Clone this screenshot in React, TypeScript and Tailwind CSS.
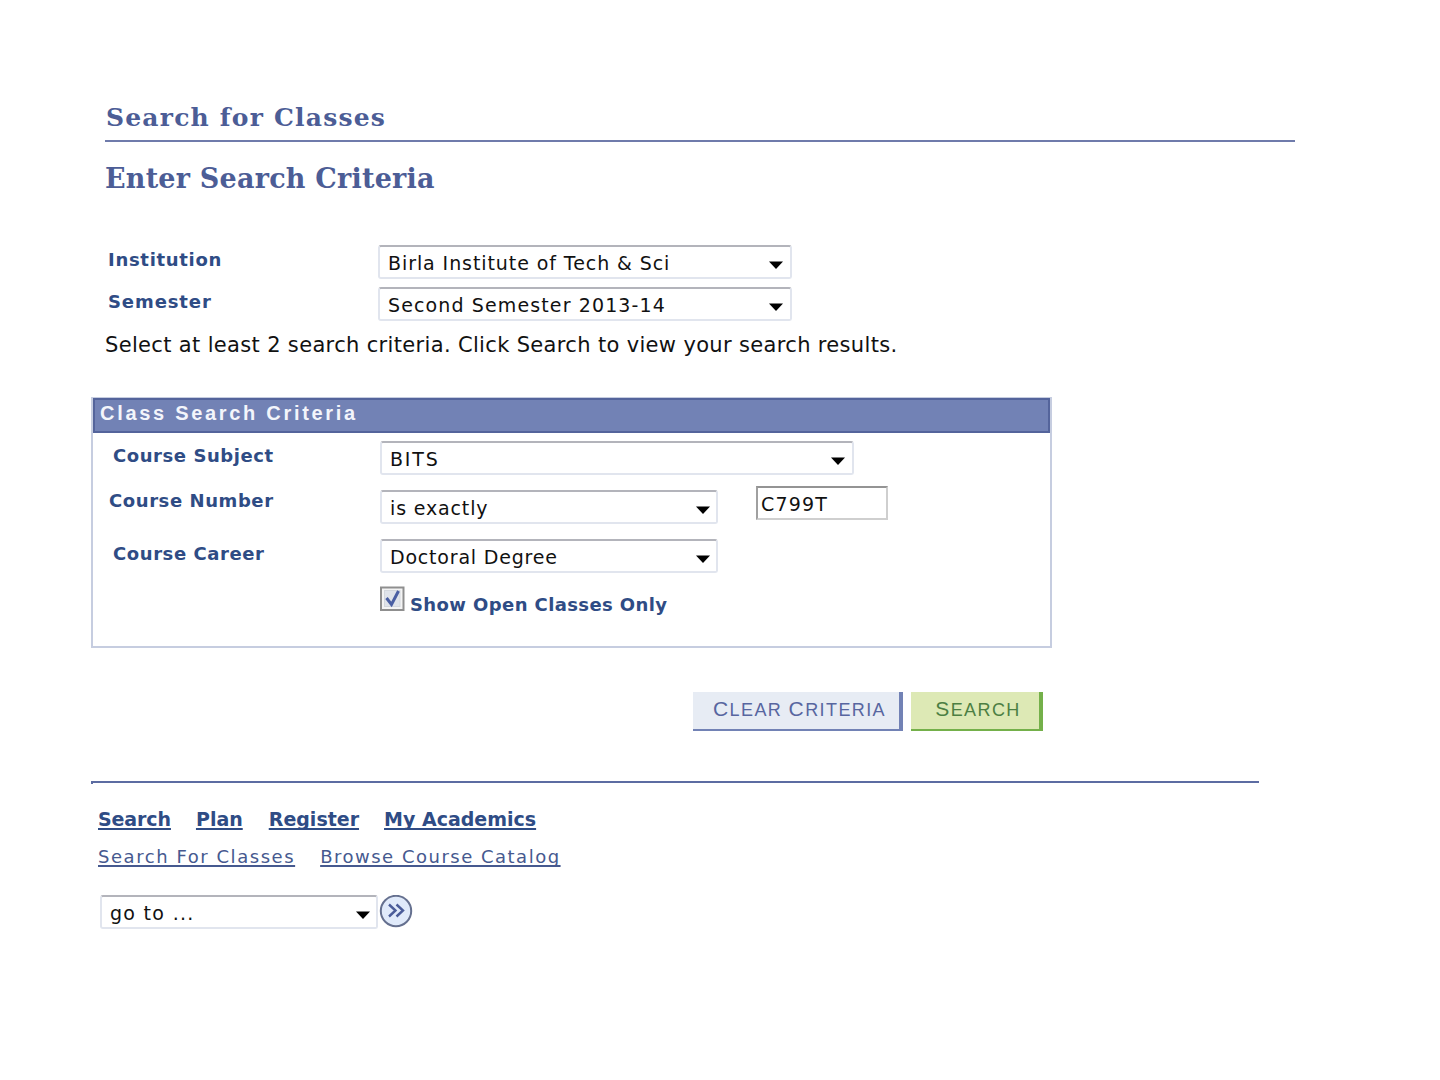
import type { ReactNode } from 'react'
import clsx from 'clsx'

interface SelectBoxProps {
  children: ReactNode
  className?: string
}

function SelectBox({ children, className }: SelectBoxProps) {
  return (
    <div
      className={clsx(
        "flex h-[34px] shrink-0 justify-between rounded-[3px] border-2 border-[#e1e5ee] border-t-[#b3b4bb] bg-white pl-[8px] pr-[6px] text-[19px] leading-[24px] text-[#111]",
        className
      )}
    >
      <span className="mt-[4px] whitespace-nowrap">{children}</span>
      <svg className="mt-[14px] h-[8px] w-[14px]" viewBox="0 0 14 8">
        <path d="M0 0.5h14L7 8z" fill="#000" />
      </svg>
    </div>
  )
}

function Label({ children, className }: SelectBoxProps) {
  return (
    <span className={clsx("shrink-0 whitespace-nowrap text-[18px] font-bold leading-[24px] text-[#2f4c85]", className)}>
      {children}
    </span>
  )
}

function NavLink({ children, className }: SelectBoxProps) {
  return (
    <a
      href="#"
      className={clsx("whitespace-nowrap underline underline-offset-2 [text-decoration-skip-ink:none]", className)}
    >
      {children}
    </a>
  )
}

export default function App() {
  return (
    <div className="h-[1080px] w-[1440px] overflow-hidden bg-white pl-[91px] pt-[106px] font-['DejaVu_Sans',Verdana,sans-serif]">

      {/* TITLES */}
      <div className="ml-[14px] w-[1190px] font-['DejaVu_Serif',Georgia,serif] font-bold text-[#4c5d96]">
        <h1 className="h-[34px] pl-px text-[25px] leading-[24px] tracking-[1.2px]">Search for Classes</h1>
        <div className="h-[2px] bg-[#6f7bab]" />
        <h2 className="mt-[25px] text-[27px] leading-[24px] tracking-[0.23px]">Enter Search Criteria</h2>
      </div>

      {/* TERM */}
      <div className="mt-[54px] flex flex-col gap-[8px] pl-[17px]">
        <div className="flex h-[34px]">
          <Label className="mt-[3px] w-[270px] tracking-[0.7px]">Institution</Label>
          <SelectBox className="w-[414px] pr-[7px] tracking-[0.92px]">Birla Institute of Tech &amp; Sci</SelectBox>
        </div>
        <div className="flex h-[34px]">
          <Label className="mt-[3px] w-[270px] tracking-[0.9px]">Semester</Label>
          <SelectBox className="w-[414px] pr-[7px] tracking-[1.12px]">Second Semester 2013-14</SelectBox>
        </div>
      </div>
      <p className="ml-[14px] mt-[12px] text-[21px] leading-[25px] tracking-[0.34px] text-[#111]">
        Select at least 2 search criteria. Click Search to view your search results.
      </p>

      {/* CRITERIA PANEL */}
      <div className="mt-[39px] h-[251px] w-[961px] border-2 border-t border-[#c6cde0]">
        <div className="h-[35px] border-2 border-[#54649b] bg-[#7282b5] pl-[5px] pt-px font-['Liberation_Sans',Arial,sans-serif] text-[20px] font-bold leading-[24px] tracking-[2.7px] text-[#f3f5fb]">
          Class Search Criteria
        </div>
        <div className="flex flex-col pt-[8px]">
          <div className="flex h-[49px] pl-[20px]">
            <Label className="mt-[3px] w-[267px] tracking-[0.56px]">Course Subject</Label>
            <SelectBox className="w-[474px] pr-[7px] tracking-[1.8px]">BITS</SelectBox>
          </div>
          <div className="flex h-[49px] pl-[16px]">
            <Label className="-mt-px w-[271px] tracking-[0.58px]">Course Number</Label>
            <SelectBox className="w-[338px] tracking-[0.85px]">is exactly</SelectBox>
            <div className="-mt-[4px] ml-[38px] h-[34px] w-[132px] border-2 border-[#cfcfcf] border-l-[#a0a0a0] border-t-[#949494] pl-[3px] pt-[4px] text-[19px] leading-[24px] tracking-[1.2px] text-[#111]">
              C799T
            </div>
          </div>
          <div className="flex h-[49px] pl-[20px]">
            <Label className="mt-[3px] w-[267px] tracking-[0.58px]">Course Career</Label>
            <SelectBox className="w-[338px] tracking-[0.8px]">Doctoral Degree</SelectBox>
          </div>
          <div className="flex pl-[287px]">
            <svg className="-mt-[2px] h-[25px] w-[25px]" viewBox="0 0 25 25">
              <rect x="1" y="1.500" width="22.500" height="22.500" fill="#f4f4f4" stroke="#8f8f8f" strokeWidth="2" />
              <rect x="4.5" y="4.5" width="15.500" height="16" fill="#dfe3ea" stroke="#d3d7dd" />
              <path d="M6.500 12l5 6.500L18.500 5" fill="none" stroke="#4a5fa3" strokeWidth="3" />
            </svg>
            <Label className="ml-[5px] mt-[5px] tracking-[0.4px]">Show Open Classes Only</Label>
          </div>
        </div>
      </div>

      {/* BUTTONS */}
      <div className="mt-[44px] flex h-[39px] gap-[8px] pl-[602px] font-['Liberation_Sans',Arial,sans-serif] text-[18px] leading-[24px]">
        <button className="w-[210px] whitespace-nowrap border-b-2 border-r-4 border-[#7282b5] bg-[#e7ecf4] pb-[3px] pl-[7px] tracking-[1.4px] text-[#5766a0]">
          <span className="text-[21px]">C</span>LEAR <span className="text-[21px]">C</span>RITERIA
        </button>
        <button className="w-[132px] whitespace-nowrap border-b-2 border-r-4 border-[#74b04a] bg-[#dde9b5] pb-[3px] pl-[6px] tracking-[1.4px] text-[#4c7f43]">
          <span className="text-[21px]">S</span>EARCH
        </button>
      </div>

      {/* FOOTER NAVIGATION */}
      <div className="mt-[50px] h-[3px] w-[1168px] border-t-2 border-[#5c6ca2]">
        <div className="h-px w-[2px] bg-[#5c6ca2]" />
      </div>
      <nav className="mt-[23px] flex gap-[25px] pl-[7px] text-[19px] font-bold leading-[24px] text-[#2f4c85]">
        <NavLink className="decoration-2 tracking-[-0.1px]">Search</NavLink>
        <NavLink className="decoration-2">Plan</NavLink>
        <NavLink className="ml-px decoration-2">Register</NavLink>
        <NavLink className="decoration-2">My Academics</NavLink>
      </nav>
      <nav className="mt-[14px] flex gap-[25px] pl-[7px] text-[18px] leading-[24px] text-[#46598f]">
        <NavLink className="decoration-2 tracking-[1.55px]">Search For Classes</NavLink>
        <NavLink className="decoration-2 tracking-[1.5px]">Browse Course Catalog</NavLink>
      </nav>
      <div className="mt-[26px] flex pl-[9px]">
        <SelectBox className="w-[278px] tracking-[1.3px]">go to ...</SelectBox>
        <svg className="ml-px h-[34px] w-[34px]" viewBox="0 0 34 34">
          <circle cx="17" cy="16" r="15.200" fill="#e0eafa" stroke="#65708f" strokeWidth="2" />
          <path d="M10 9.500l6.500 6l-6.500 6M17.500 9.500l6.500 6l-6.500 6" fill="none" stroke="#4a5c99" strokeWidth="2.400" />
        </svg>
      </div>
    </div>
  )
}
